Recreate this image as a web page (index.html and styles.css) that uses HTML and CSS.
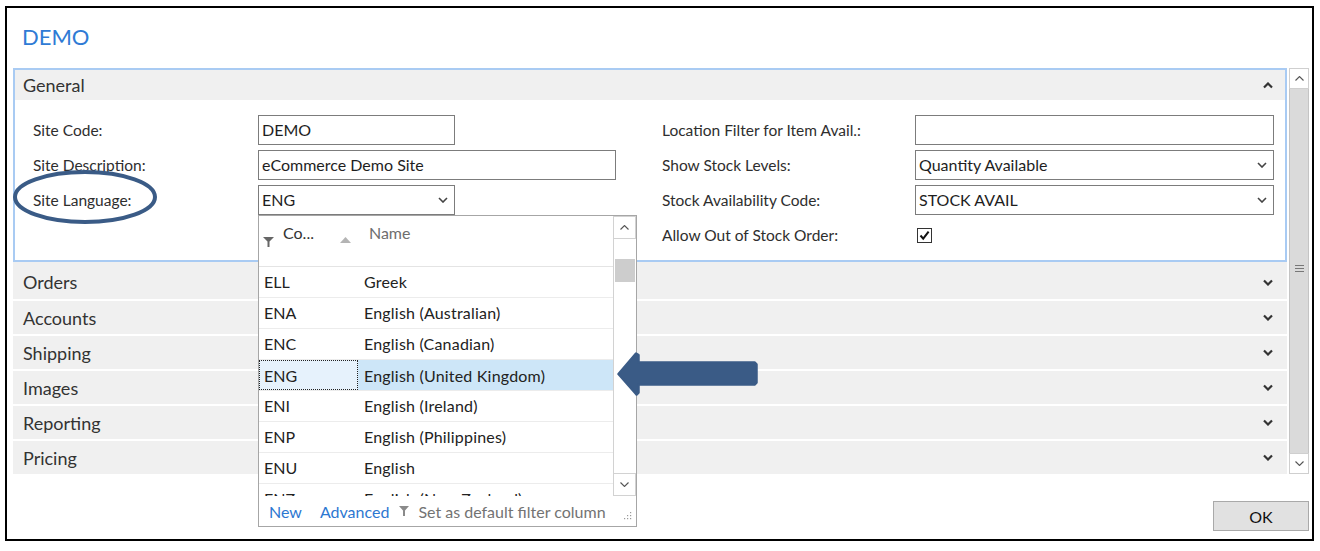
FILE: index.html
```html
<!DOCTYPE html>
<html>
<head>
<meta charset="utf-8">
<link rel="stylesheet" href="styles.css">
</head>
<body>
<div class="frame">
  <h1 class="title">DEMO</h1>
  <div class="main">
    <div class="content">
      <section class="panel">
        <div class="panel-head">
          <span>General</span>
          <svg class="chev" width="10" height="7" viewBox="0 0 10 7"><path d="M1 5.5 L5 1.5 L9 5.5" fill="none" stroke="#333" stroke-width="2.2"/></svg>
        </div>
        <div class="form">
          <div class="lbl r1 c1">Site Code:</div>
          <div class="field short r1 c2">DEMO</div>
          <div class="lbl r2 c1">Site Description:</div>
          <div class="field r2 c2">eCommerce Demo Site</div>
          <div class="lbl r3 c1">Site Language:</div>
          <div class="field short r3 c2 lang">ENG
            <svg class="sel-chev" width="10" height="6" viewBox="0 0 10 6"><path d="M1 1 L5 5 L9 1" fill="none" stroke="#444" stroke-width="1.6"/></svg>
            <div class="popup">
              <div class="pop-body">
                <div class="pop-list">
                  <div class="pop-head">
                    <svg class="funnel" width="11" height="10" viewBox="0 0 11 10"><path d="M0 0 H11 L6.5 4.5 V10 H4.5 V4.5 Z" fill="#666"/></svg>
                    <span class="h-code">Co...</span>
                    <svg class="sort" width="11" height="6" viewBox="0 0 11 6"><path d="M0 6 L5.5 0 L11 6 Z" fill="#b4b4b4"/></svg>
                    <span class="h-name">Name</span>
                  </div>
                  <div class="row"><span class="code">ELL</span><span class="name">Greek</span></div>
                  <div class="row"><span class="code">ENA</span><span class="name">English (Australian)</span></div>
                  <div class="row"><span class="code">ENC</span><span class="name">English (Canadian)</span></div>
                  <div class="row selected"><span class="code sel">ENG</span><span class="name">English (United Kingdom)</span></div>
                  <div class="row"><span class="code">ENI</span><span class="name">English (Ireland)</span></div>
                  <div class="row"><span class="code">ENP</span><span class="name">English (Philippines)</span></div>
                  <div class="row"><span class="code">ENU</span><span class="name">English</span></div>
                  <div class="row"><span class="code">ENZ</span><span class="name">English (New Zealand)</span></div>
                </div>
                <div class="pop-scroll">
                  <div class="sbtn"><svg width="9" height="5" viewBox="0 0 9 5"><path d="M0.5 4.5 L4.5 0.5 L8.5 4.5" fill="none" stroke="#555" stroke-width="1.1"/></svg></div>
                  <div class="ptrack"><div class="pthumb"></div></div>
                  <div class="sbtn"><svg width="9" height="5" viewBox="0 0 9 5"><path d="M0.5 0.5 L4.5 4.5 L8.5 0.5" fill="none" stroke="#555" stroke-width="1.1"/></svg></div>
                </div>
              </div>
              <div class="pop-foot">
                <span class="link">New</span>
                <span class="link adv">Advanced</span>
                <svg class="ffunnel" width="10" height="10" viewBox="0 0 10 10"><path d="M0 0 H10 L6 4.5 V10 H4 V4.5 Z" fill="#8a8a8a"/></svg>
                <span class="muted">Set as default filter column</span>
                <svg class="grip" width="8" height="8" viewBox="0 0 8 8" fill="#9a9a9a"><rect x="6" y="0" width="1.2" height="1.2"/><rect x="3" y="3" width="1.2" height="1.2"/><rect x="6" y="3" width="1.2" height="1.2"/><rect x="0" y="6" width="1.2" height="1.2"/><rect x="3" y="6" width="1.2" height="1.2"/><rect x="6" y="6" width="1.2" height="1.2"/></svg>
              </div>
            </div>
          </div>

          <div class="lbl r1 c4">Location Filter for Item Avail.:</div>
          <div class="field r1 c5"></div>
          <div class="lbl r2 c4">Show Stock Levels:</div>
          <div class="field r2 c5">Quantity Available
            <svg class="sel-chev" width="10" height="6" viewBox="0 0 10 6"><path d="M1 1 L5 5 L9 1" fill="none" stroke="#444" stroke-width="1.6"/></svg>
          </div>
          <div class="lbl r3 c4">Stock Availability Code:</div>
          <div class="field r3 c5">STOCK AVAIL
            <svg class="sel-chev" width="10" height="6" viewBox="0 0 10 6"><path d="M1 1 L5 5 L9 1" fill="none" stroke="#444" stroke-width="1.6"/></svg>
          </div>
          <div class="lbl r4 c4">Allow Out of Stock Order:</div>
          <div class="r4 c5 checkcell">
            <span class="checkbox"><svg width="13" height="13" viewBox="0 0 13 13"><path d="M2.5 6.5 L5.2 9.6 L10.6 2.6" fill="none" stroke="#111" stroke-width="2"/></svg></span>
          </div>
        </div>
      </section>
      <div class="section first"><span>Orders</span><svg class="chev" width="10" height="7" viewBox="0 0 10 7"><path d="M1 1.5 L5 5.5 L9 1.5" fill="none" stroke="#333" stroke-width="2.2"/></svg></div>
      <div class="section"><span>Accounts</span><svg class="chev" width="10" height="7" viewBox="0 0 10 7"><path d="M1 1.5 L5 5.5 L9 1.5" fill="none" stroke="#333" stroke-width="2.2"/></svg></div>
      <div class="section"><span>Shipping</span><svg class="chev" width="10" height="7" viewBox="0 0 10 7"><path d="M1 1.5 L5 5.5 L9 1.5" fill="none" stroke="#333" stroke-width="2.2"/></svg></div>
      <div class="section"><span>Images</span><svg class="chev" width="10" height="7" viewBox="0 0 10 7"><path d="M1 1.5 L5 5.5 L9 1.5" fill="none" stroke="#333" stroke-width="2.2"/></svg></div>
      <div class="section"><span>Reporting</span><svg class="chev" width="10" height="7" viewBox="0 0 10 7"><path d="M1 1.5 L5 5.5 L9 1.5" fill="none" stroke="#333" stroke-width="2.2"/></svg></div>
      <div class="section"><span>Pricing</span><svg class="chev" width="10" height="7" viewBox="0 0 10 7"><path d="M1 1.5 L5 5.5 L9 1.5" fill="none" stroke="#333" stroke-width="2.2"/></svg></div>
    </div>
    <div class="vscroll">
      <div class="vbtn"><svg width="9" height="5" viewBox="0 0 9 5"><path d="M0.5 4.5 L4.5 0.5 L8.5 4.5" fill="none" stroke="#555" stroke-width="1.1"/></svg></div>
      <div class="vtrack">
        <svg width="9" height="7" viewBox="0 0 9 7"><rect x="0" y="0" width="9" height="1" fill="#777"/><rect x="0" y="3" width="9" height="1" fill="#777"/><rect x="0" y="6" width="9" height="1" fill="#777"/></svg>
      </div>
      <div class="vbtn"><svg width="9" height="5" viewBox="0 0 9 5"><path d="M0.5 0.5 L4.5 4.5 L8.5 0.5" fill="none" stroke="#555" stroke-width="1.1"/></svg></div>
    </div>
  </div>
  <div class="actions"><button class="ok">OK</button></div>

  <svg class="ellipse" width="144" height="54" viewBox="0 0 144 54"><ellipse cx="72" cy="27" rx="70" ry="25" fill="none" stroke="#3a5b86" stroke-width="4"/></svg>
  <svg class="arrow" width="142" height="44" viewBox="0 0 142 44"><path d="M1.5 22 L19 1.5 L21.5 3 L21.5 10.5 L137.5 10.5 L139.5 12.5 L139.5 30.5 L137.5 32.5 L21.5 32.5 L21.5 40.5 L19.5 42.5 Z" fill="#3a5b86" stroke="#3a5b86" stroke-width="2.5" stroke-linejoin="round"/></svg>
</div>
</body>
</html>
```

FILE: styles.css
```css
* { box-sizing: border-box; }

body {
  margin: 0;
  background: #ffffff;
  font-family: Lato, "Open Sans", "DejaVu Sans", sans-serif;
  color: #333;
}

.frame {
  position: relative;
  margin: 6px 0 0 5px;
  width: 1309px;
  height: 535px;
  border: 2px solid #000;
  background: #fff;
}

.title {
  margin: 0;
  height: 60px;
  padding: 14px 0 0 15px;
  font-size: 22px;
  line-height: 30px;
  font-weight: 400;
  color: #2f7bd5;
}

.main {
  display: flex;
  gap: 2px;
  margin-left: 6px;
}

.content {
  width: 1274px;
}

.panel {
  border: 2px solid #a9cbf3;
}

.panel-head {
  height: 30px;
  background: #f0f0f0;
  display: flex;
  align-items: center;
  justify-content: space-between;
  padding: 0 12px 0 8px;
  font-size: 18px;
  color: #333;
}

.form {
  display: grid;
  grid-template-columns: 225px 358px 46px 253px 359px;
  grid-template-rows: repeat(4, 30px);
  row-gap: 5px;
  padding: 15px 11px 10px 18px;
}

.r1 { grid-row: 1; }
.r2 { grid-row: 2; }
.r3 { grid-row: 3; }
.r4 { grid-row: 4; }
.c1 { grid-column: 1; }
.c2 { grid-column: 2; }
.c4 { grid-column: 4; }
.c5 { grid-column: 5; }

.lbl {
  display: flex;
  align-items: center;
  font-size: 15.5px;
  color: #2e2e2e;
  padding-bottom: 1px;
}

.field {
  position: relative;
  height: 30px;
  border: 1px solid #7c7c7c;
  display: flex;
  align-items: center;
  justify-content: space-between;
  padding: 0 6px 2px 3px;
  font-size: 16px;
  color: #1e1e1e;
  background: #fff;
}

.field.short {
  width: 197px;
}

.sel-chev {
  flex: none;
  margin-top: 2px;
}

.checkcell {
  display: flex;
  align-items: center;
  padding-left: 2px;
}

.checkbox {
  width: 15px;
  height: 15px;
  border: 1px solid #333;
  display: flex;
  align-items: center;
  justify-content: center;
  background: #fff;
}

/* dropdown popup */
.popup {
  position: absolute;
  z-index: 5;
  left: -1px;
  top: calc(100% + 1px);
  width: 379px;
  height: 312px;
  border: 1px solid #a6a6a6;
  background: #fff;
  display: flex;
  flex-direction: column;
  color: #222;
}

.pop-body {
  display: flex;
  height: 280px;
}

.pop-list {
  flex: 1;
  overflow: hidden;
}

.pop-head {
  height: 51px;
  border-bottom: 1px solid #e4e4e4;
  display: flex;
  align-items: flex-start;
  padding: 7px 0 0 4px;
  font-size: 16px;
  line-height: 20px;
}

.funnel {
  margin-top: 14px;
}

.h-code {
  margin-left: 9px;
  color: #333;
}

.sort {
  margin: 14px 0 0 26px;
}

.h-name {
  margin-left: 18px;
  color: #6e6e6e;
}

.row {
  display: flex;
  align-items: center;
  height: 31px;
  border-bottom: 1px solid #ececec;
  font-size: 16px;
  padding-bottom: 1px;
}

.code {
  width: 99px;
  padding-left: 5px;
  flex: none;
}

.name {
  padding-left: 6px;
  letter-spacing: 0.2px;
}

.row.selected {
  background: #cde6f8;
  padding-bottom: 0;
}

.code.sel {
  align-self: stretch;
  display: flex;
  align-items: center;
  background: #e6f2fc;
  border: 1px dotted #222;
  padding-left: 4px;
}

.pop-scroll {
  width: 23px;
  border-left: 1px solid #d2d2d2;
  display: flex;
  flex-direction: column;
}

.sbtn {
  height: 23px;
  border: 1px solid #d2d2d2;
  border-left: none;
  display: flex;
  align-items: center;
  justify-content: center;
  background: #fff;
}

.ptrack {
  flex: 1;
  padding: 20px 1px 0 1px;
}

.pthumb {
  height: 23px;
  background: #cdcdcd;
}

.pop-foot {
  height: 30px;
  display: flex;
  align-items: center;
  padding: 0 4px 0 10px;
  font-size: 16px;
}

.link {
  color: #2d77d1;
}

.adv {
  margin-left: 18px;
}

.ffunnel {
  margin-left: 10px;
}

.muted {
  margin-left: 9px;
  color: #737373;
}

.grip {
  margin-left: auto;
  margin-top: 10px;
}

/* collapsed sections */
.section {
  height: 33px;
  margin-top: 2px;
  background: #f0f0f0;
  display: flex;
  align-items: center;
  justify-content: space-between;
  padding: 0 14px 0 10px;
  font-size: 18px;
  color: #333;
}

.section.first {
  margin-top: 0;
  height: 37px;
  padding-top: 3px;
}

/* page scrollbar */
.vscroll {
  width: 20px;
  display: flex;
  flex-direction: column;
}

.vbtn {
  height: 21px;
  border: 1px solid #cfcfcf;
  background: #fff;
  display: flex;
  align-items: center;
  justify-content: center;
}

.vtrack {
  flex: 1;
  background: #dadada;
  border-left: 1px solid #c4c4c4;
  border-right: 1px solid #c4c4c4;
  display: flex;
  justify-content: center;
  padding-top: 176px;
}

.actions {
  display: flex;
  justify-content: flex-end;
  padding-right: 3px;
  margin-top: 27px;
}

.ok {
  width: 96px;
  height: 30px;
  border: 1px solid #a9a9a9;
  background: #e1e1e1;
  font-family: Lato, "Open Sans", sans-serif;
  font-size: 16px;
  color: #111;
  padding: 0;
}

/* annotations drawn over the screenshot */
.ellipse {
  position: absolute;
  left: 6px;
  top: 162px;
  z-index: 8;
}

.arrow {
  position: absolute;
  left: 610px;
  top: 344px;
  z-index: 8;
}
```
